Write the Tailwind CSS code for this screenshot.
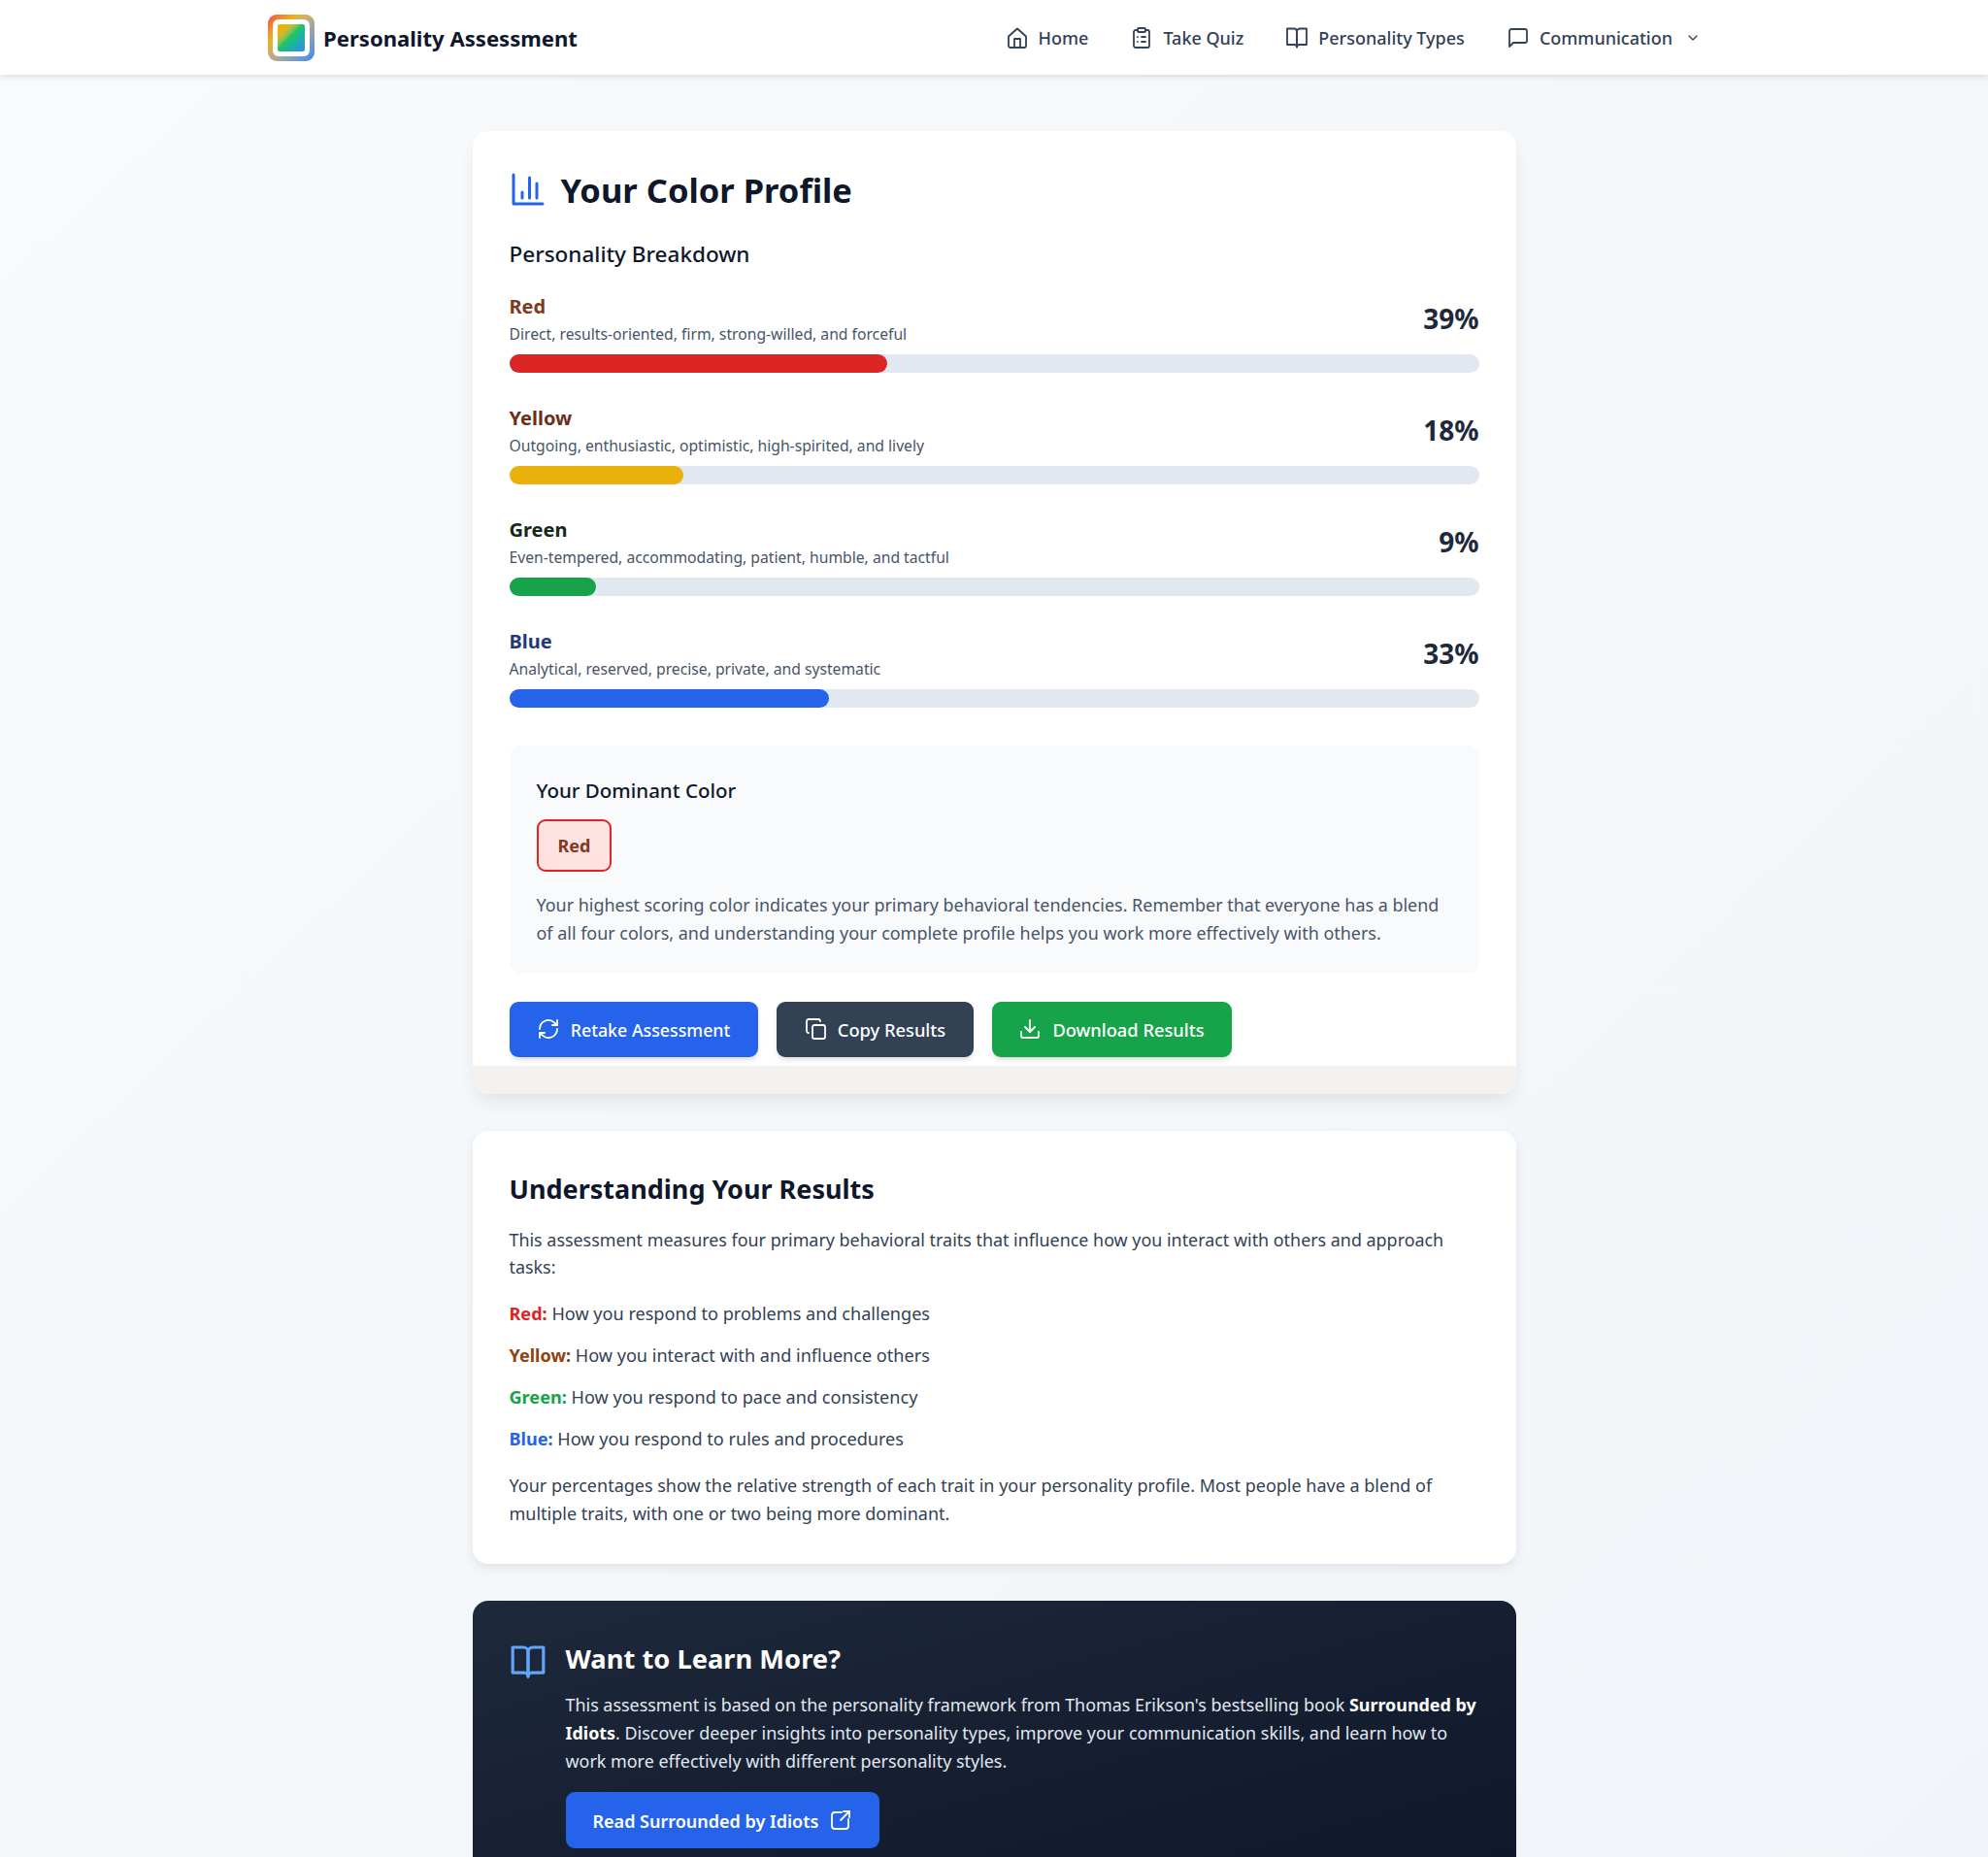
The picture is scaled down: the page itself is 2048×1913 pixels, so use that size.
<!DOCTYPE html>
<html lang="en">
<head>
  <meta charset="UTF-8" />
  <meta name="viewport" content="width=device-width, initial-scale=1.0" />
  <title>Personality Assessment</title>
  <script src="https://cdn.jsdelivr.net/npm/@tailwindcss/browser@4"></script>
</head>
<body class="h-[1913px] overflow-hidden bg-gradient-to-br from-[#f8fafc] to-[#f1f5f9] font-['Noto_Sans',sans-serif] text-[#334155]">

  <!-- nav -->
  <header class="h-[77px] bg-white shadow-[0_2px_6px_rgba(0,0,0,0.12)]">
    <div class="mx-auto flex h-full w-[1536px] items-center justify-between pl-[20px] pr-[40px]">
      <a class="flex items-center gap-[9px]">
        <span class="flex h-[48px] w-[48px] items-center justify-center rounded-[9px] bg-gradient-to-br from-[#ef4444] via-[#eab308] via-30% to-[#3b82f6] p-[5px]">
          <span class="block h-full w-full rounded-[6px] bg-white p-[5px]">
            <span class="block h-full w-full rounded-[2px] bg-gradient-to-br from-[#eab308] from-20% via-[#22c55e] via-45% to-[#3b82f6]"></span>
          </span>
        </span>
        <span class="pt-[2px] text-[22.1px] font-bold text-[#0f172a]">Personality Assessment</span>
      </a>
      <nav class="flex items-center gap-[43px] text-[18px] font-medium text-[#334155]">
        <a class="flex items-center gap-[10px]">
          <svg class="h-[24px] w-[24px]" fill="none" stroke="currentColor" stroke-width="1.8" stroke-linecap="round" stroke-linejoin="round" viewBox="0 0 24 24"><path d="M3 10.5L12 2.5l9 8V20a2 2 0 0 1-2 2H5a2 2 0 0 1-2-2z"/><path d="M9 22v-9h6v9"/></svg>
          <span class="pt-[2px]">Home</span>
        </a>
        <a class="flex items-center gap-[10px]">
          <svg class="h-[24px] w-[24px]" fill="none" stroke="currentColor" stroke-width="1.8" stroke-linecap="round" stroke-linejoin="round" viewBox="0 0 24 24"><rect x="8" y="2" width="8" height="4" rx="1"/><path d="M16 4h2a2 2 0 0 1 2 2v14a2 2 0 0 1-2 2H6a2 2 0 0 1-2-2V6a2 2 0 0 1 2-2h2"/><path d="M12 11h4M12 16h4M8 11h.01M8 16h.01"/></svg>
          <span class="pt-[2px]">Take Quiz</span>
        </a>
        <a class="flex items-center gap-[10px]">
          <svg class="h-[24px] w-[24px]" fill="none" stroke="currentColor" stroke-width="1.8" stroke-linecap="round" stroke-linejoin="round" viewBox="0 0 24 24"><path d="M2 2.5h7a3 3 0 0 1 3 3v16a2.5 2.5 0 0 0-2.5-2.5H2z"/><path d="M22 2.5h-7a3 3 0 0 0-3 3v16a2.5 2.5 0 0 1 2.5-2.5H22z"/></svg>
          <span class="pt-[2px]">Personality Types</span>
        </a>
        <a class="flex items-center gap-[10px]">
          <svg class="h-[24px] w-[24px]" fill="none" stroke="currentColor" stroke-width="1.8" stroke-linecap="round" stroke-linejoin="round" viewBox="0 0 24 24"><path d="M21 15a2 2 0 0 1-2 2H7l-4 4V5a2 2 0 0 1 2-2h14a2 2 0 0 1 2 2z"/></svg>
          <span class="pt-[2px]">Communication</span>
          <svg class="ml-[3px] h-[16px] w-[16px]" fill="none" stroke="currentColor" stroke-width="2" stroke-linecap="round" stroke-linejoin="round" viewBox="0 0 24 24"><path d="M6 9l6 6 6-6"/></svg>
        </a>
      </nav>
    </div>
  </header>

  <main class="mx-auto w-[1075px] pt-[58px]">

    <!-- profile card -->
    <section class="overflow-hidden rounded-[16px] bg-white shadow-[0_10px_20px_-5px_rgba(0,0,0,0.1)]">
      <div class="px-[38px] pt-[37px] pb-[9px]">
        <div class="flex items-center gap-[16px]">
          <svg class="ml-[1px] -mt-[2px] h-[36px] w-[36px] text-[#2563eb]" fill="none" stroke="currentColor" stroke-width="2" stroke-linecap="round" stroke-linejoin="round" viewBox="0 0 24 24"><path d="M2 2v20h20"/><path d="M8 18v-4M13 18V4M18 18V8"/></svg>
          <h1 class="text-[34.5px] leading-[48px] font-bold text-[#0f172a]">Your Color Profile</h1>
        </div>
        <h2 class="mt-[26px] text-[22.5px] leading-[32px] font-medium text-[#0f172a]">Personality Breakdown</h2>

        <div class="mt-[24px] flex flex-col gap-[33px]">
          <div>
            <div class="flex items-center justify-between">
              <div>
                <div class="text-[20px] leading-[28px] font-bold text-[#7f3a22]">Red</div>
                <div class="text-[15.7px] leading-[28px] text-[#475569]">Direct, results-oriented, firm, strong-willed, and forceful</div>
              </div>
              <div class="pb-[5px] text-[28px] font-bold text-[#1e293b]">39%</div>
            </div>
            <div class="mt-[7px] h-[19px] rounded-full bg-[#e2e8f0]"><div class="h-full rounded-full bg-[#dc2626]" style="width:39%"></div></div>
          </div>
          <div>
            <div class="flex items-center justify-between">
              <div>
                <div class="text-[20px] leading-[28px] font-bold text-[#6b2f1a]">Yellow</div>
                <div class="text-[15.7px] leading-[28px] text-[#475569]">Outgoing, enthusiastic, optimistic, high-spirited, and lively</div>
              </div>
              <div class="pb-[5px] text-[28px] font-bold text-[#1e293b]">18%</div>
            </div>
            <div class="mt-[7px] h-[19px] rounded-full bg-[#e2e8f0]"><div class="h-full rounded-full bg-[#eab00c]" style="width:18%"></div></div>
          </div>
          <div>
            <div class="flex items-center justify-between">
              <div>
                <div class="text-[20px] leading-[28px] font-bold text-[#14281d]">Green</div>
                <div class="text-[15.7px] leading-[28px] text-[#475569]">Even-tempered, accommodating, patient, humble, and tactful</div>
              </div>
              <div class="pb-[5px] text-[28px] font-bold text-[#1e293b]">9%</div>
            </div>
            <div class="mt-[7px] h-[19px] rounded-full bg-[#e2e8f0]"><div class="h-full rounded-full bg-[#16a34a]" style="width:9%"></div></div>
          </div>
          <div>
            <div class="flex items-center justify-between">
              <div>
                <div class="text-[20px] leading-[28px] font-bold text-[#1e3a7a]">Blue</div>
                <div class="text-[15.7px] leading-[28px] text-[#475569]">Analytical, reserved, precise, private, and systematic</div>
              </div>
              <div class="pb-[5px] text-[28px] font-bold text-[#1e293b]">33%</div>
            </div>
            <div class="mt-[7px] h-[19px] rounded-full bg-[#e2e8f0]"><div class="h-full rounded-full bg-[#2563eb]" style="width:33%"></div></div>
          </div>
        </div>

        <div class="mt-[39px] rounded-[12px] bg-[#f8fafc] px-[28px] pt-[30px] pb-[27px]">
          <h3 class="text-[20.5px] leading-[32px] font-medium text-[#0f172a]">Your Dominant Color</h3>
          <span class="mt-[14px] inline-block rounded-[9px] border-[2px] border-[#dc2626] bg-[#fee2e2] px-[20px] py-[11px] text-[18px] leading-[28px] font-bold text-[#7f3a22]">Red</span>
          <p class="mt-[20px] text-[17.95px] leading-[28.8px] text-[#475569]">Your highest scoring color indicates your primary behavioral tendencies. Remember that everyone has a blend of all four colors, and understanding your complete profile helps you work more effectively with others.</p>
        </div>

        <div class="mt-[29px] flex gap-[19px]">
          <a class="flex h-[57px] w-[256px] items-center justify-center gap-[11px] rounded-[9px] bg-[#2563eb] text-[17.8px] font-medium text-white shadow-md">
            <svg class="h-[24px] w-[24px]" fill="none" stroke="currentColor" stroke-width="1.8" stroke-linecap="round" stroke-linejoin="round" viewBox="0 0 24 24"><path d="M3 12a9 9 0 0 1 15-6.7L21 8"/><path d="M21 3v5h-5"/><path d="M21 12a9 9 0 0 1-15 6.7L3 16"/><path d="M8 16H3v5"/></svg>
            <span class="pt-[2px]">Retake Assessment</span>
          </a>
          <a class="flex h-[57px] w-[203px] items-center justify-center gap-[11px] rounded-[9px] bg-[#334155] text-[18.3px] font-medium text-white shadow-md">
            <svg class="h-[24px] w-[24px]" fill="none" stroke="currentColor" stroke-width="1.8" stroke-linecap="round" stroke-linejoin="round" viewBox="0 0 24 24"><rect x="9" y="8" width="13" height="14" rx="2"/><path d="M5 16a2 2 0 0 1-2-2V4a2 2 0 0 1 2-2h10a2 2 0 0 1 2 2"/></svg>
            <span class="pt-[2px]">Copy Results</span>
          </a>
          <a class="flex h-[57px] w-[247px] items-center justify-center gap-[11px] rounded-[9px] bg-[#16a34a] text-[18.3px] font-medium text-white shadow-md">
            <svg class="h-[24px] w-[24px]" fill="none" stroke="currentColor" stroke-width="1.8" stroke-linecap="round" stroke-linejoin="round" viewBox="0 0 24 24"><path d="M3 15v4a2 2 0 0 0 2 2h14a2 2 0 0 0 2-2v-4"/><path d="M7 10l5 5 5-5"/><path d="M12 15V3"/></svg>
            <span class="pt-[2px]">Download Results</span>
          </a>
        </div>
      </div>
      <div class="h-[29px] bg-[#f3f2f0]"></div>
    </section>

    <!-- explanation card -->
    <section class="mt-[38px] rounded-[16px] bg-white px-[38px] pt-[40px] pb-[37px] shadow-[0_4px_12px_rgba(0,0,0,0.08)]">
      <h2 class="text-[27px] leading-[40px] font-bold text-[#0f172a]">Understanding Your Results</h2>
      <p class="mt-[18px] text-[17.9px] leading-[28.8px]">This assessment measures four primary behavioral traits that influence how you interact with others and approach tasks:</p>
      <ul class="mt-[19px] flex flex-col gap-[14px] text-[18.1px] leading-[28.8px]">
        <li><strong class="font-bold text-[#dc2626]">Red:</strong> How you respond to problems and challenges</li>
        <li><strong class="font-bold text-[#92400e]">Yellow:</strong> How you interact with and influence others</li>
        <li><strong class="font-bold text-[#16a34a]">Green:</strong> How you respond to pace and consistency</li>
        <li><strong class="font-bold text-[#2563eb]">Blue:</strong> How you respond to rules and procedures</li>
      </ul>
      <p class="mt-[20px] text-[18px] leading-[28.8px]">Your percentages show the relative strength of each trait in your personality profile. Most people have a blend of multiple traits, with one or two being more dominant.</p>
    </section>

    <!-- book card -->
    <section class="mt-[38px] flex gap-[20px] rounded-[16px] bg-gradient-to-br from-[#1e293b] to-[#0f172a] px-[38px] pt-[39px] pb-[38px] text-white">
      <svg class="mt-[5px] h-[38px] w-[38px] shrink-0 text-[#60a5fa]" fill="none" stroke="currentColor" stroke-width="2" stroke-linecap="round" stroke-linejoin="round" viewBox="0 0 24 24"><path d="M2 2.5h7a3 3 0 0 1 3 3v16a2.5 2.5 0 0 0-2.5-2.5H2z"/><path d="M22 2.5h-7a3 3 0 0 0-3 3v16a2.5 2.5 0 0 1 2.5-2.5H22z"/></svg>
      <div>
        <h2 class="pt-[1px] text-[27.3px] leading-[40px] font-bold">Want to Learn More?</h2>
        <p class="mt-[13px] -mr-[8px] text-[17.92px] leading-[28.8px] text-[#e2e8f0]">This assessment is based on the personality framework from Thomas Erikson's bestselling book <strong class="font-bold text-white">Surrounded by Idiots</strong>. Discover deeper insights into personality types, improve your communication skills, and learn how to<br />work more effectively with different personality styles.</p>
        <a class="mt-[18px] inline-flex h-[58px] items-center gap-[11px] rounded-[9px] bg-[#2563eb] px-[28px] text-[18px] font-semibold text-white">
          <span class="pt-[2px]">Read Surrounded by Idiots</span>
          <svg class="h-[24px] w-[24px]" fill="none" stroke="currentColor" stroke-width="1.8" stroke-linecap="round" stroke-linejoin="round" viewBox="0 0 24 24"><path d="M13 4H6a3 3 0 0 0-3 3v11a3 3 0 0 0 3 3h11a3 3 0 0 0 3-3v-7"/><path d="M21 3l-9 9"/><path d="M15 3h6v6"/></svg>
        </a>
      </div>
    </section>
  </main>
</body>
</html>
